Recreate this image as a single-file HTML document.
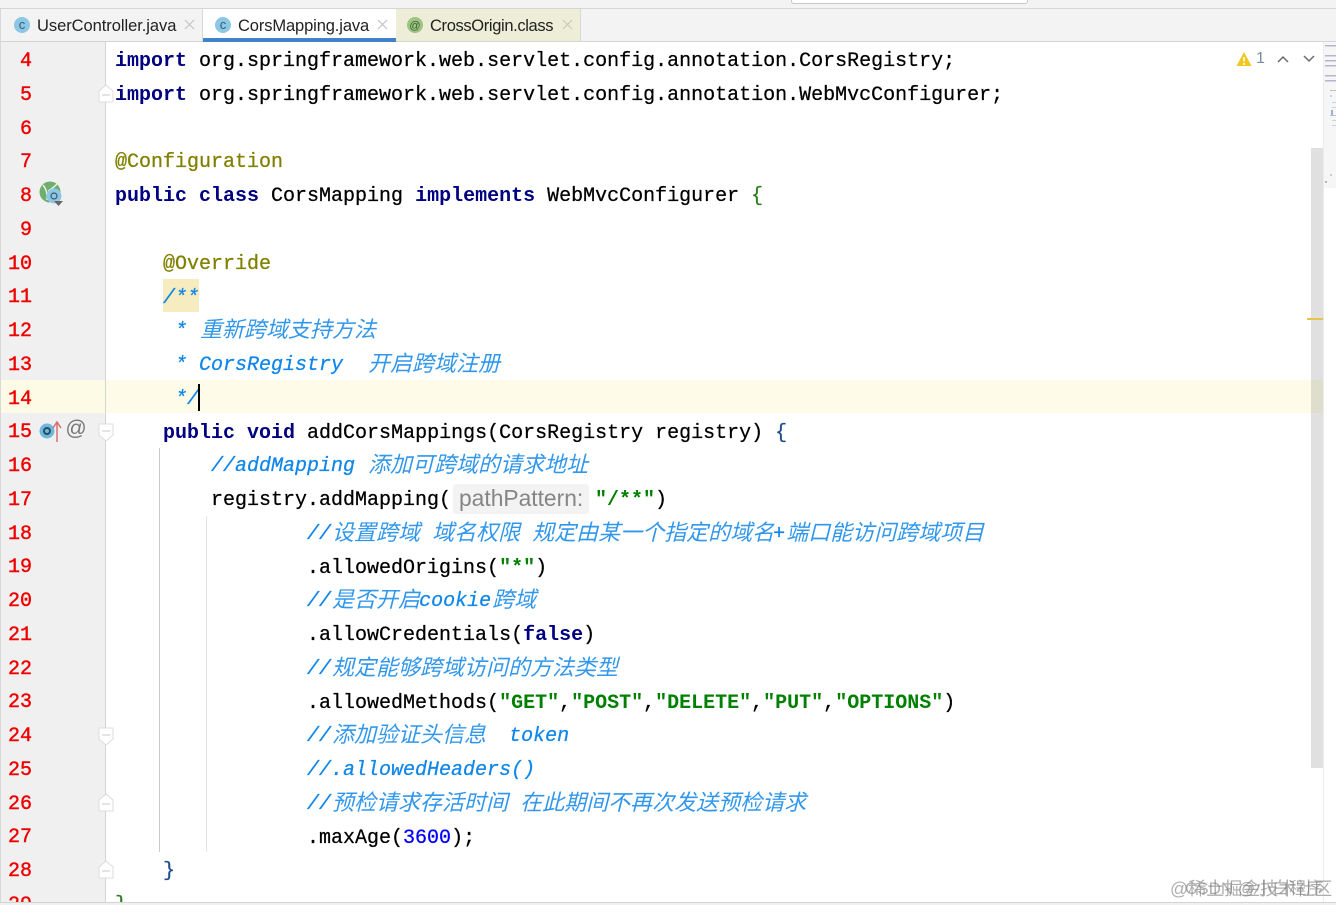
<!DOCTYPE html>
<html><head><meta charset="utf-8"><style>
html,body{margin:0;padding:0;background:#fff}
body{width:1336px;height:905px;position:relative;overflow:hidden;font-family:"Liberation Mono","Noto Sans CJK SC",monospace;font-size:20px;color:#000}
.a{position:absolute}
.l{position:absolute;left:115px;height:34px;line-height:34px;margin-top:2px;white-space:pre;-webkit-text-stroke:.25px currentColor}
.n{position:absolute;left:0;width:32px;text-align:right;height:34px;line-height:34px;margin-top:2px;color:#ee0000;-webkit-text-stroke:.4px #ee0000}
.s{color:#008000;font-weight:700;-webkit-text-stroke:0}
.k{color:#000080;font-weight:700;-webkit-text-stroke:0}
.an{color:#808000}
.c{color:#0f86e8;font-style:italic}
.h{font-family:"Noto Sans CJK SC","Liberation Sans",sans-serif;font-size:22px;font-style:italic;font-weight:400;line-height:0;opacity:.85;-webkit-text-stroke:0;position:relative;left:1px;top:1px}
.d{color:#0000ff}
.tab{position:absolute;top:9px;height:32px;line-height:34px;font-family:"Liberation Sans",sans-serif;font-size:16.5px;color:#222}
.tn{position:absolute;top:0;white-space:pre}
.x{position:absolute;top:10px}
</style></head><body>
<!-- top area -->
<div class="a" style="left:0;top:0;width:1336px;height:8px;background:#f3f3f3"></div>
<div class="a" style="left:791px;top:-3px;width:235px;height:5px;background:#fff;border:1px solid #c8c8c8;border-radius:3px"></div>
<div class="a" style="left:0;top:8px;width:1336px;height:1px;background:#d6d6d6"></div>
<div class="a" style="left:0;top:9px;width:1336px;height:32px;background:#f3f3f3"></div>
<div class="a" style="left:0;top:41px;width:1336px;height:1px;background:#d4d4d4"></div>
<!-- gutter -->
<div class="a" style="left:0;top:42px;width:105px;height:860px;background:#f0f0f0"></div>
<div class="a" style="left:0;top:9px;width:1px;height:893px;background:#d8d8d8"></div>
<div class="a" style="left:105px;top:42px;width:1px;height:860px;background:#d4d4d4"></div>
<!-- tabs -->
<div class="tab" style="left:1px;width:201px;background:#f3f3f3">
  <svg class="a" style="left:12px;top:7px" width="18" height="18"><circle cx="9" cy="9" r="8" fill="#8cc8e6"/><text x="9" y="13" text-anchor="middle" font-family="Liberation Sans" font-size="13" fill="#3a5a70">c</text></svg>
  <span class="tn" style="left:36px;letter-spacing:-.05px">UserController.java</span>
  <svg class="x" style="left:183px" width="11" height="11"><path d="M1 1L10 10M10 1L1 10" stroke="#c4c4c4" stroke-width="1.2"/></svg>
</div>
<div class="a" style="left:202px;top:9px;width:1px;height:32px;background:#d8d8d8"></div>
<div class="tab" style="left:203px;width:193px;background:#fff">
  <svg class="a" style="left:11px;top:7px" width="18" height="18"><circle cx="9" cy="9" r="8" fill="#8cc8e6"/><text x="9" y="13" text-anchor="middle" font-family="Liberation Sans" font-size="13" fill="#3a5a70">c</text></svg>
  <span class="tn" style="left:35px;letter-spacing:-.12px">CorsMapping.java</span>
  <svg class="x" style="left:174px" width="11" height="11"><path d="M1 1L10 10M10 1L1 10" stroke="#c4c4c4" stroke-width="1.2"/></svg>
</div>
<div class="a" style="left:203px;top:38px;width:193px;height:4px;background:#4083c9"></div>
<div class="tab" style="left:396px;width:184px;background:#eeeed8">
  <svg class="a" style="left:10px;top:7px" width="18" height="18"><circle cx="9" cy="9" r="8" fill="#9cc483"/><text x="9" y="13" text-anchor="middle" font-family="Liberation Sans" font-size="11" fill="#3f5a30">@</text></svg>
  <span class="tn" style="left:34px;letter-spacing:-.36px">CrossOrigin.class</span>
  <svg class="x" style="left:166px" width="11" height="11"><path d="M1 1L10 10M10 1L1 10" stroke="#c8c8bc" stroke-width="1.2"/></svg>
</div>
<div class="a" style="left:580px;top:9px;width:1px;height:32px;background:#d8d8d8"></div>
<!-- current line -->
<div class="a" style="left:1px;top:380px;width:104px;height:33px;background:#fdfbe6"></div>
<div class="a" style="left:106px;top:380px;width:1217px;height:33px;background:#fefce9"></div>
<div class="a" style="left:163px;top:279px;width:36px;height:33px;background:#f6ecc0"></div>
<!-- indent guides -->
<div class="a" style="left:159px;top:448px;width:1px;height:404px;background:#c9c9c9"></div>
<div class="a" style="left:206px;top:516px;width:1px;height:336px;background:#e2e2e2"></div>
<!-- line numbers -->
<div class="n" style="top:43px">4</div>
<div class="n" style="top:77px">5</div>
<div class="n" style="top:111px">6</div>
<div class="n" style="top:144px">7</div>
<div class="n" style="top:178px">8</div>
<div class="n" style="top:212px">9</div>
<div class="n" style="top:246px">10</div>
<div class="n" style="top:279px">11</div>
<div class="n" style="top:313px">12</div>
<div class="n" style="top:347px">13</div>
<div class="n" style="top:381px">14</div>
<div class="n" style="top:414px">15</div>
<div class="n" style="top:448px">16</div>
<div class="n" style="top:482px">17</div>
<div class="n" style="top:516px">18</div>
<div class="n" style="top:549px">19</div>
<div class="n" style="top:583px">20</div>
<div class="n" style="top:617px">21</div>
<div class="n" style="top:651px">22</div>
<div class="n" style="top:684px">23</div>
<div class="n" style="top:718px">24</div>
<div class="n" style="top:752px">25</div>
<div class="n" style="top:786px">26</div>
<div class="n" style="top:819px">27</div>
<div class="n" style="top:853px">28</div>
<!-- code -->
<div class="l" style="top:43px"><span class="k">import</span> org.springframework.web.servlet.config.annotation.CorsRegistry;</div>
<div class="l" style="top:77px"><span class="k">import</span> org.springframework.web.servlet.config.annotation.WebMvcConfigurer;</div>
<div class="l an" style="top:144px">@Configuration</div>
<div class="l" style="top:178px"><span class="k">public class</span> CorsMapping <span class="k">implements</span> WebMvcConfigurer <span style="color:#2e7d1e">{</span></div>
<div class="l an" style="top:246px">    @Override</div>
<div class="l c" style="top:280px">    /**</div>
<div class="l c" style="top:313px">     * <span class="h">重新跨域支持方法</span></div>
<div class="l c" style="top:347px">     * CorsRegistry  <span class="h">开启跨域注册</span></div>
<div class="l c" style="top:381px">     */</div>
<div class="a" style="left:198px;top:384px;width:2px;height:27px;background:#000"></div>
<div class="l" style="top:415px">    <span class="k">public void</span> addCorsMappings(CorsRegistry registry) <span style="color:#1f4e8c">{</span></div>
<div class="l c" style="top:448px">        //addMapping <span class="h">添加可跨域的请求地址</span></div>
<div class="l" style="top:482px">        registry.addMapping(</div>
<div class="a" style="left:453px;top:484px;width:136px;height:30px;background:#f3f3f3;border-radius:3px"></div>
<div class="a" style="left:459px;top:484px;height:30px;line-height:29px;font-family:'Liberation Sans',sans-serif;font-size:22.8px;color:#858585;white-space:pre">pathPattern:</div>
<div class="l" style="left:595px;top:482px"><span class="s">"/**"</span>)</div>
<div class="l c" style="top:516px">                //<span class="h">设置跨域</span> <span class="h">域名权限</span> <span class="h">规定由某一个指定的域名</span>+<span class="h">端口能访问跨域项目</span></div>
<div class="l" style="top:550px">                .allowedOrigins(<span class="s">"*"</span>)</div>
<div class="l c" style="top:583px">                //<span class="h">是否开启</span>cookie<span class="h">跨域</span></div>
<div class="l" style="top:617px">                .allowCredentials(<span class="k">false</span>)</div>
<div class="l c" style="top:651px">                //<span class="h">规定能够跨域访问的方法类型</span></div>
<div class="l" style="top:685px">                .allowedMethods(<span class="s">"GET"</span>,<span class="s">"POST"</span>,<span class="s">"DELETE"</span>,<span class="s">"PUT"</span>,<span class="s">"OPTIONS"</span>)</div>
<div class="l c" style="top:718px">                //<span class="h">添加验证头信息</span>  token</div>
<div class="l c" style="top:752px">                //.allowedHeaders()</div>
<div class="l c" style="top:786px">                //<span class="h">预检请求存活时间</span> <span class="h">在此期间不再次发送预检请求</span></div>
<div class="l" style="top:820px">                .maxAge(<span class="d">3600</span>);</div>
<div class="l" style="top:853px">    <span style="color:#1f4e8c">}</span></div>
<!-- clipped line 29 -->
<div class="a" style="left:0;top:887px;width:1336px;height:15px;overflow:hidden">
  <div class="n" style="top:0">29</div>
  <div class="l" style="top:0;color:#2e7d1e">}</div>
</div>
<!-- fold marks -->
<svg class="a" style="left:98px;top:84px" width="16" height="20"><path d="M1 18V7L8 1L15 7V18Z" fill="#fff" stroke="#dcdcdc"/><path d="M4 11H12" stroke="#c8c8c8"/></svg>
<svg class="a" style="left:98px;top:423px" width="16" height="20"><path d="M1 1V12L8 18L15 12V1Z" fill="#fff" stroke="#dcdcdc"/><path d="M4 8H12" stroke="#c8c8c8"/></svg>
<svg class="a" style="left:98px;top:727px" width="16" height="20"><path d="M1 1V12L8 18L15 12V1Z" fill="#fff" stroke="#dcdcdc"/><path d="M4 8H12" stroke="#c8c8c8"/></svg>
<svg class="a" style="left:98px;top:793px" width="16" height="20"><path d="M1 18V7L8 1L15 7V18Z" fill="#fff" stroke="#dcdcdc"/><path d="M4 11H12" stroke="#c8c8c8"/></svg>
<svg class="a" style="left:98px;top:860px" width="16" height="20"><path d="M1 18V7L8 1L15 7V18Z" fill="#fff" stroke="#dcdcdc"/><path d="M4 11H12" stroke="#c8c8c8"/></svg>
<!-- gutter icons -->
<svg class="a" style="left:39px;top:181px" width="26" height="26"><circle cx="11" cy="11" r="10.500" fill="#6fae6f"/><path d="M4 4Q9 10 8 19M18 3Q13 8 9 10" stroke="#e8f2e8" stroke-width="1.5" fill="none"/><circle cx="15" cy="15" r="7.500" fill="#8cc8e6"/><circle cx="15" cy="15" r="3" fill="none" stroke="#456" stroke-width="1.2"/><path d="M15 20H24L19.500 25Z" fill="#666"/></svg>
<svg class="a" style="left:39px;top:420px" width="24" height="24"><circle cx="8" cy="11" r="7.500" fill="#6db9de"/><circle cx="8" cy="11" r="3" fill="none" stroke="#2b4a5e" stroke-width="2"/><path d="M18 22V3M14 8L18 2L22 8" stroke="#d9706f" stroke-width="1.5" fill="none"/></svg>
<div class="a" style="left:65px;top:414px;width:22px;height:30px;line-height:30px;text-align:center;font-family:'Liberation Sans',sans-serif;font-size:21px;color:#777">@</div>
<!-- inspection widget -->
<svg class="a" style="left:1236px;top:51px" width="16" height="16"><path d="M8 1L15.500 15H.5Z" fill="#f0c820"/><path d="M8 6V10.500M8 12V14" stroke="#fff" stroke-width="1.600"/></svg>
<div class="a" style="left:1256px;top:50px;font-family:'Liberation Sans',sans-serif;font-size:16px;line-height:18px;color:#7a8c9c">1</div>
<svg class="a" style="left:1277px;top:53px" width="12" height="12"><path d="M1 9L6 4L11 9" stroke="#6a6a6a" stroke-width="1.5" fill="none"/></svg>
<svg class="a" style="left:1303px;top:53px" width="12" height="12"><path d="M1 3L6 8L11 3" stroke="#6a6a6a" stroke-width="1.5" fill="none"/></svg>
<!-- scrollbar -->
<div class="a" style="left:1311px;top:148px;width:12px;height:620px;background:rgba(0,0,0,.12)"></div>
<div class="a" style="left:1323px;top:42px;width:1px;height:860px;background:#ececec"></div>
<div class="a" style="left:1307px;top:318px;width:16px;height:2px;background:#e8c44c"></div>
<!-- minimap -->
<div class="a" style="left:1324px;top:42px;width:12px;height:146px;background:#f6f6f6"></div>
<svg class="a" style="left:1324px;top:42px;opacity:.7" width="12" height="146">
<g fill="#9a9ac0"><rect x="1" y="3" width="11" height="1.500"/><rect x="1" y="13" width="11" height="1.500"/><rect x="1" y="18" width="11" height="1.500"/><rect x="1" y="23" width="11" height="1.500"/><rect x="1" y="33" width="11" height="1.500"/><rect x="1" y="38" width="11" height="1.500"/></g>
<g fill="#a8a8b8"><rect x="6" y="48" width="6" height="1"/><rect x="6" y="73" width="6" height="1"/></g>
<g fill="#a4c8e8"><rect x="6" y="53" width="2" height="2"/><rect x="8" y="60" width="4" height="1"/><rect x="8" y="65" width="4" height="1"/><rect x="7" y="68" width="2" height="5" fill="#6a96cc"/><rect x="8" y="78" width="4" height="1"/><rect x="8" y="83" width="4" height="1"/></g>
<rect x="6" y="132" width="2" height="2" fill="#bbb"/><rect x="1" y="139" width="2" height="2" fill="#999"/></svg>
<!-- watermark -->
<div class="a" style="left:1170px;top:877px;font-family:'Liberation Sans','Noto Sans CJK SC',sans-serif;font-size:18px;line-height:24px;color:rgba(120,120,120,.6);white-space:pre">@稀土掘金技术社区</div>
<div class="a" style="left:1185px;top:877px;font-family:'Liberation Sans','Noto Sans CJK SC',sans-serif;font-size:17px;line-height:24px;color:rgba(120,120,120,.6);white-space:pre">CSDN @小白程序</div>
<!-- bottom -->
<div class="a" style="left:0;top:902px;width:1336px;height:3px;background:#f0f0f0"></div>
<div class="a" style="left:0;top:902px;width:1336px;height:1px;background:#d4d4d4"></div>
</body></html>
